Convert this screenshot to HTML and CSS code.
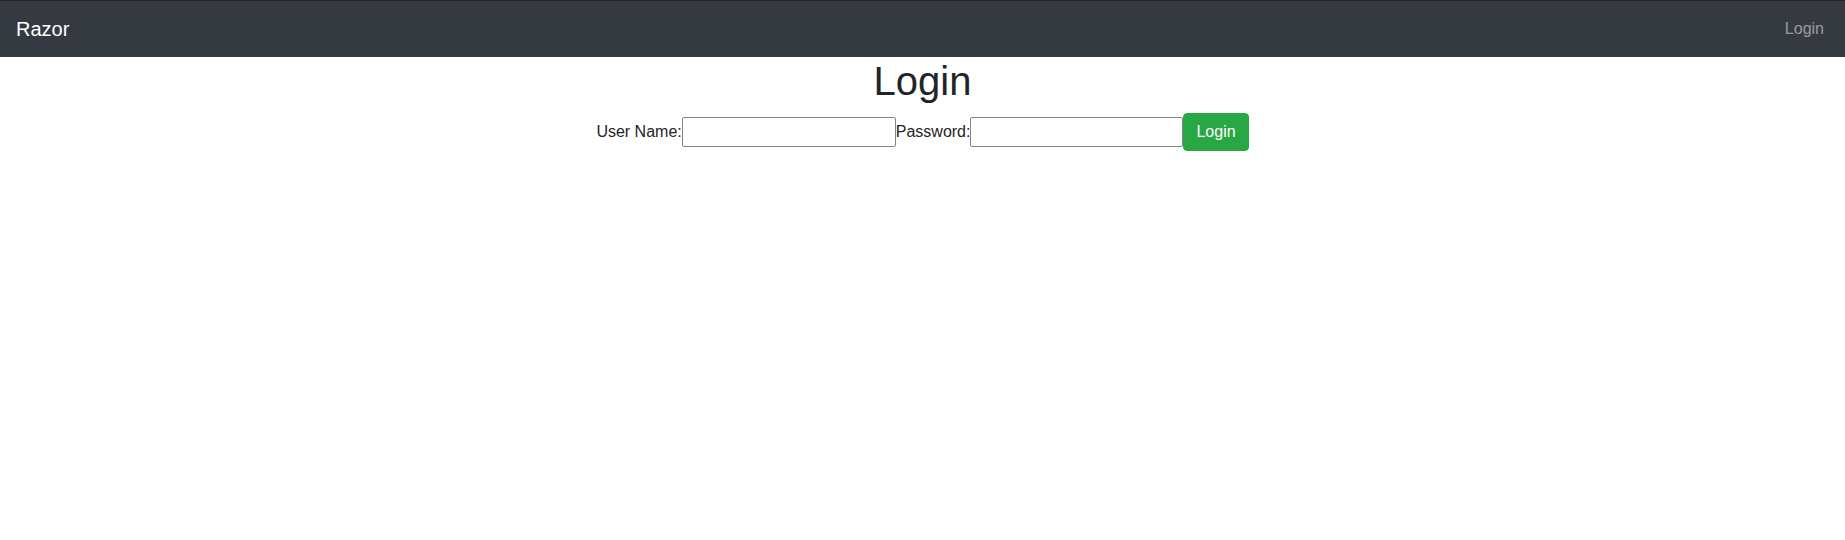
FILE: index.html
```html
<!DOCTYPE html>
<html lang="en">
<head>
<meta charset="utf-8">
<title>Razor</title>
<link rel="stylesheet" href="styles.css">
</head>
<body>
<header class="navbar">
  <a class="brand" href="#">Razor</a>
  <a class="nav-link" href="#">Login</a>
</header>
<main class="content">
  <h1 class="title">Login</h1>
  <form class="login-form"><label class="field-label">User Name:</label><input class="field-input" type="text"><label class="field-label">Password:</label><input class="field-input field-input-pw" type="password"><button class="btn-success" type="button">Login</button></form>
</main>
</body>
</html>
```

FILE: styles.css
```css
* { box-sizing: border-box; }
html, body {
  margin: 0;
  padding: 0;
  background: #fff;
  color: #212529;
  font-family: "Liberation Sans", Arial, sans-serif;
  font-size: 16px;
  line-height: 1.5;
}
.navbar {
  display: flex;
  justify-content: space-between;
  align-items: center;
  height: 57px;
  padding: 8px 21px 8px 16px;
  background: #343a40;
  border-top: 1px solid #1f2327;
}
.brand {
  color: #fff;
  font-size: 20px;
  line-height: 30px;
  padding: 5px 0;
  text-decoration: none;
}
.nav-link {
  color: rgba(255, 255, 255, 0.5);
  text-decoration: none;
  font-size: 16px;
  line-height: 24px;
  padding: 8px 0;
}
.content {
  text-align: center;
}
.title {
  margin: 0 0 8px;
  font-size: 40px;
  font-weight: 500;
  line-height: 1.2;
}
.login-form {
  display: flex;
  justify-content: center;
  align-items: center;
}
.field-label {
  font-size: 16px;
  line-height: 24px;
}
.field-input {
  width: 214px;
  height: 30px;
  border: 1px solid #858585;
  border-radius: 2px;
  padding: 1px 2px;
  font: inherit;
  background: #fff;
}
.field-input-pw { width: 213px; }
.btn-success {
  height: 38px;
  padding: 6px 12px;
  font: inherit;
  font-size: 16px;
  line-height: 24px;
  color: #fff;
  background: #28a745;
  border: 1px solid #28a745;
  border-radius: 4px;
}
```
